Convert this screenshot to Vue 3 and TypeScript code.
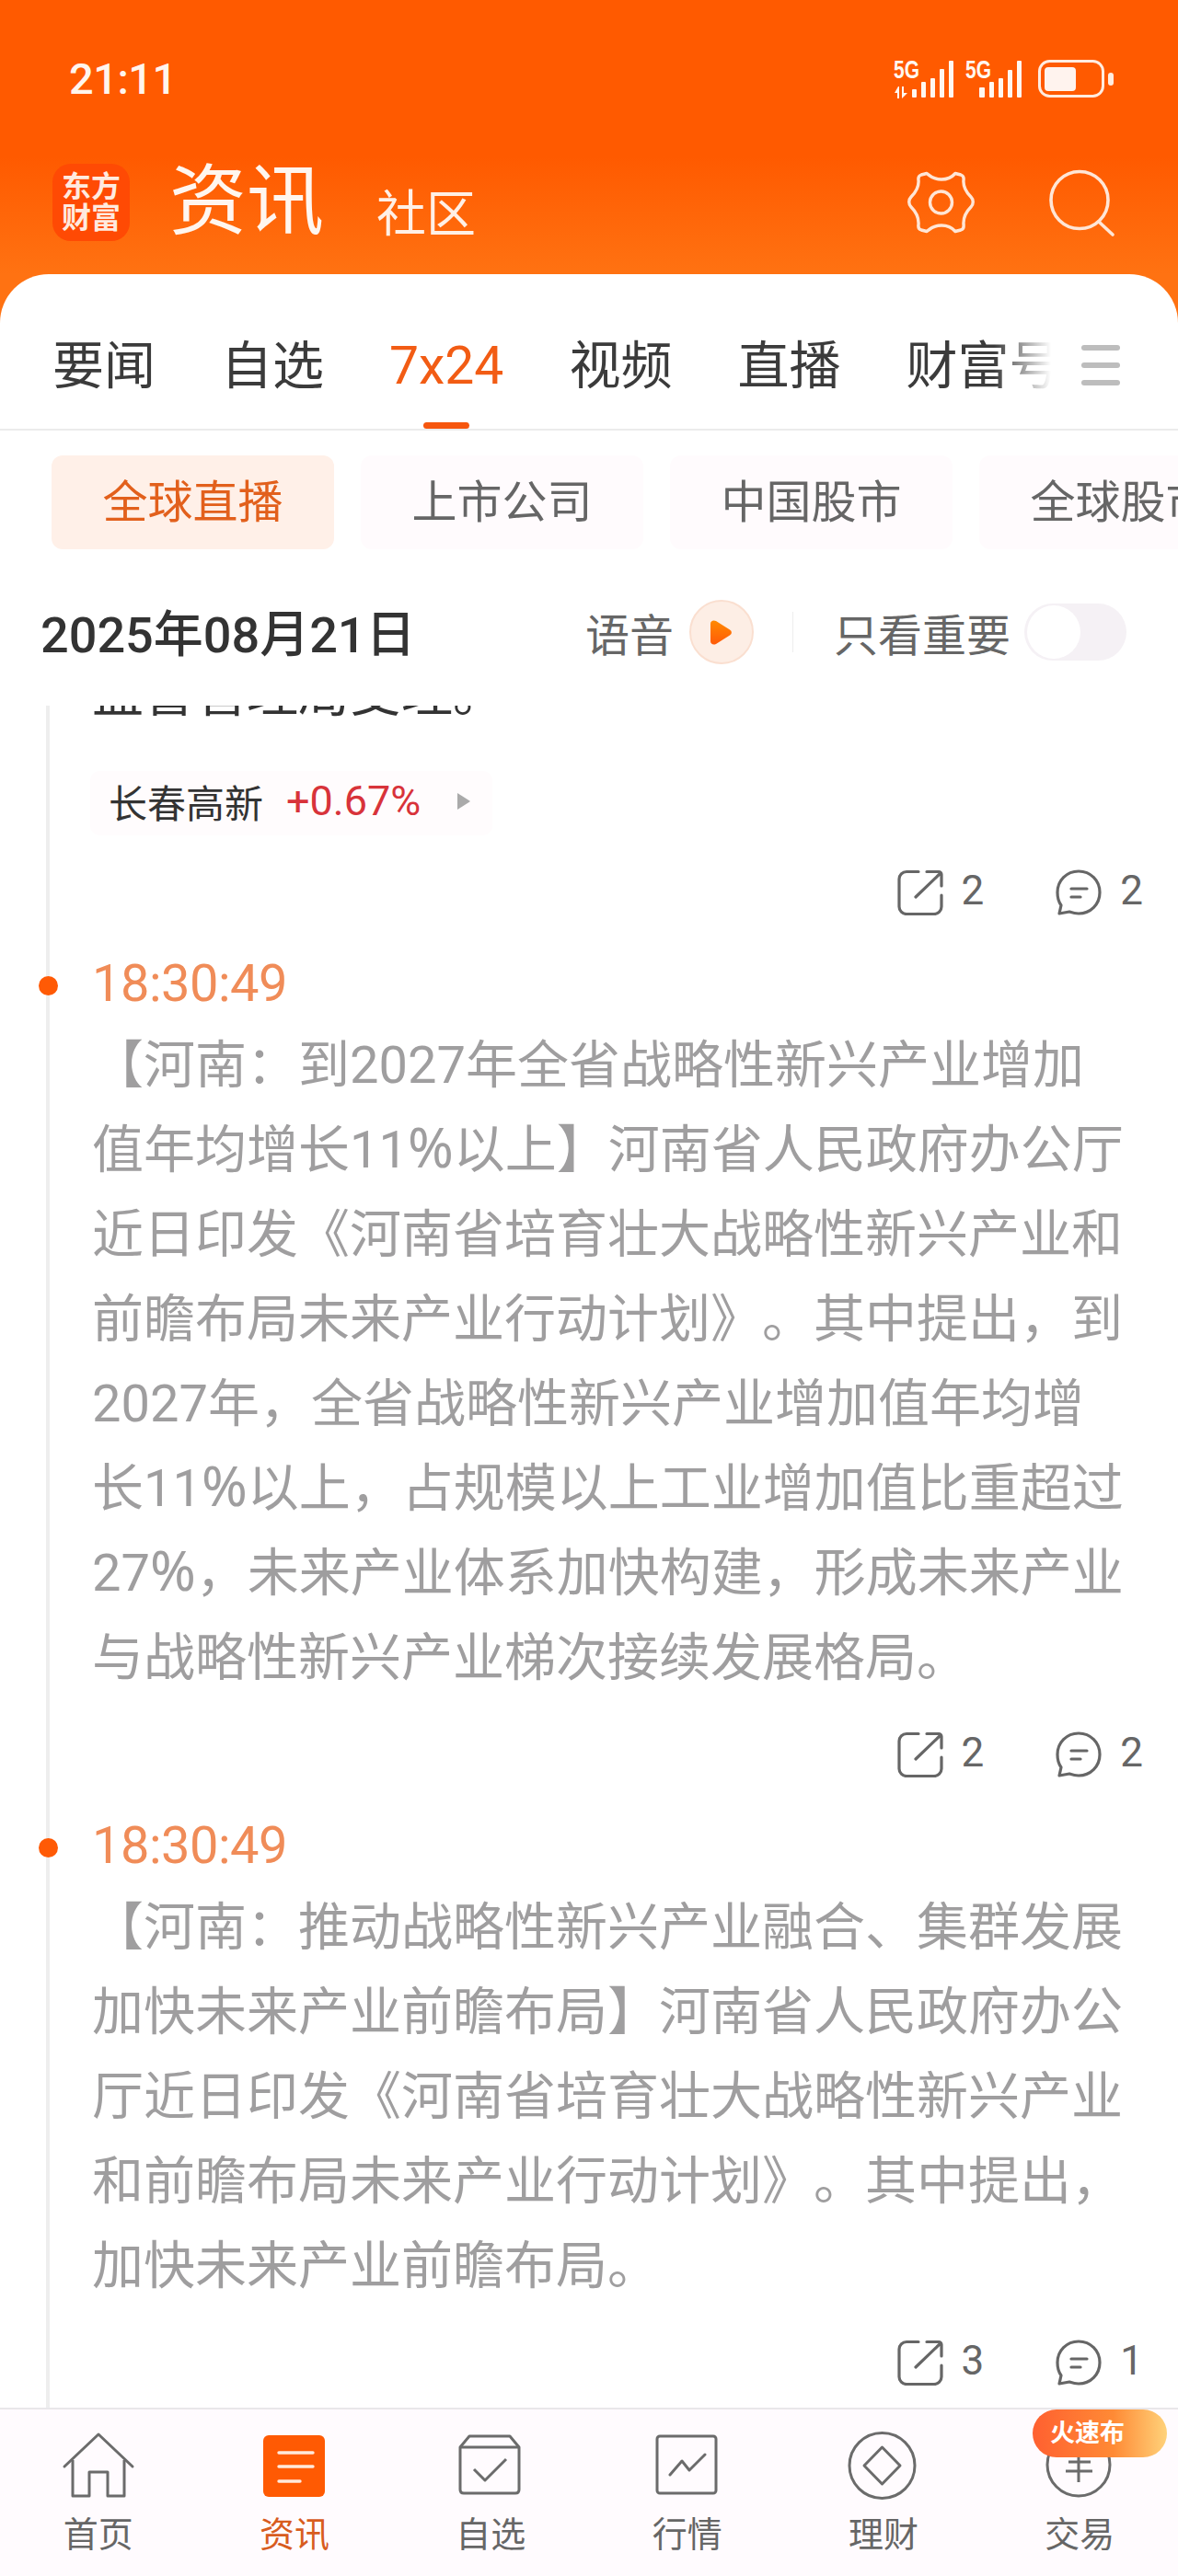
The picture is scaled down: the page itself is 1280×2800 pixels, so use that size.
<script setup lang="ts">
const tabs = ["要闻", "自选", "7x24", "视频", "直播", "财富号"];
const chips = ["全球直播", "上市公司", "中国股市", "全球股市"];

const news = [
  {
    time: "18:30:49",
    lines: [
      "【河南：到2027年全省战略性新兴产业增加",
      "值年均增长11%以上】河南省人民政府办公厅",
      "近日印发《河南省培育壮大战略性新兴产业和",
      "前瞻布局未来产业行动计划》。其中提出，到",
      "2027年，全省战略性新兴产业增加值年均增",
      "长11%以上，占规模以上工业增加值比重超过",
      "27%，未来产业体系加快构建，形成未来产业",
      "与战略性新兴产业梯次接续发展格局。",
    ],
    share: 2,
    comment: 2,
  },
  {
    time: "18:30:49",
    lines: [
      "【河南：推动战略性新兴产业融合、集群发展",
      "加快未来产业前瞻布局】河南省人民政府办公",
      "厅近日印发《河南省培育壮大战略性新兴产业",
      "和前瞻布局未来产业行动计划》。其中提出，",
      "加快未来产业前瞻布局。",
    ],
    share: 3,
    comment: 1,
  },
];

const navItems = [
  { key: "home", label: "首页" },
  { key: "news", label: "资讯" },
  { key: "fav", label: "自选" },
  { key: "market", label: "行情" },
  { key: "wealth", label: "理财" },
  { key: "trade", label: "交易" },
];
</script>

<template>
  <div class="phone">
    <header class="hero">
      <div class="status">
        <span class="clock">21:11</span>
        <div class="status-icons">
          <svg width="65" height="42" viewBox="0 0 65 42" class="sig">
            <text x="0" y="20" class="fiveg" textLength="28" lengthAdjust="spacingAndGlyphs">5G</text>
            <path d="M5 29L1 36H4V42H6V29ZM9 29V42L15 36H11V29Z" />
            <rect x="20" y="32" width="5" height="9" rx="1" />
            <rect x="30" y="24" width="5" height="17" rx="1" />
            <rect x="40" y="20" width="5" height="21" rx="1" />
            <rect x="50" y="10" width="5" height="31" rx="1" />
            <rect x="60" y="1" width="5" height="40" rx="1" />
          </svg>
          <svg width="61" height="42" viewBox="0 0 61 42" class="sig">
            <text x="0" y="20" class="fiveg" textLength="28" lengthAdjust="spacingAndGlyphs">5G</text>
            <rect x="15" y="30" width="6" height="11" rx="1" />
            <rect x="26" y="24" width="5" height="17" rx="1" />
            <rect x="36" y="20" width="5" height="21" rx="1" />
            <rect x="46" y="11" width="5" height="30" rx="1" />
            <rect x="56" y="1" width="5" height="40" rx="1" />
          </svg>
          <svg width="82" height="42" viewBox="0 0 82 42" class="batt">
            <rect x="1.500" y="1.500" width="69" height="38" rx="11" fill="none" stroke="#ffece0" stroke-width="3" />
            <rect x="7" y="8" width="34" height="26" rx="4" fill="#fff3ee" />
            <rect x="76" y="14" width="6" height="14" rx="3" fill="#ffece0" />
          </svg>
        </div>
      </div>

      <div class="titlebar">
        <div class="logo"><span>东方</span><span>财富</span></div>
        <span class="title">资讯</span>
        <span class="subtitle">社区</span>
        <div class="title-actions">
          <svg class="ic" width="71" height="68" viewBox="0 0 71 68" fill="none" stroke="#ffe6d6" stroke-width="3.400" stroke-linejoin="round">
            <path d="M14 4L20 2.500C25 7 30 9 36 9C42 9 47 7 51 2.500L57 4C60 5 60.500 7 60 10C59.500 16 62 22 68 28C71 31 71 36 68 39C62 45 59.500 51 60 58C60.500 61 60 63 57 64L51 65.500C47 61 42 59 36 59C30 59 25 61 20 65.500L14 64C11 63 10.500 61 11 58C11.500 51 9 45 3 39C0 36 0 31 3 28C9 22 11.500 16 11 10C10.500 7 11 5 14 4Z" />
            <circle cx="35.500" cy="34" r="12" />
          </svg>
          <svg class="ic" width="71" height="71" viewBox="0 0 71 71" fill="none" stroke="#ffe6d6" stroke-width="3.600">
            <circle cx="33" cy="32.500" r="31" />
            <path d="M54 56L69 70" stroke-linecap="round" />
          </svg>
        </div>
      </div>
    </header>

    <main class="sheet">
      <nav class="tabs">
        <div class="tab-scroll">
          <div
            v-for="(t, i) in tabs"
            :key="t"
            class="tab"
            :class="{ active: i === 2 }"
          >
            {{ t }}
          </div>
          <div class="tab-fade"></div>
        </div>
        <div class="menu-btn"><i></i><i></i><i></i></div>
      </nav>

      <div class="chips">
        <div v-for="(c, i) in chips" :key="c" class="chip" :class="{ on: i === 0 }">{{ c }}</div>
      </div>

      <div class="datebar">
        <span class="date">2025年08月21日</span>
        <div class="date-right">
          <span class="lab">语音</span>
          <span class="play">
            <svg width="23" height="27" viewBox="0 0 23 27">
              <defs>
                <linearGradient id="pg" x1="0" y1="0" x2="0" y2="1">
                  <stop offset="0" stop-color="#ff8a00" />
                  <stop offset="1" stop-color="#ff5a08" />
                </linearGradient>
              </defs>
              <path d="M0 4C0 1 3-.5 6 1L21 10.500C23.500 12 23.500 15 21 16.500L6 26C3 27.500 0 26 0 23Z" fill="url(#pg)" />
            </svg>
          </span>
          <span class="vline"></span>
          <span class="lab">只看重要</span>
          <span class="switch"><span class="knob"></span></span>
        </div>
      </div>

      <section class="feed">
        <div class="cut-line">监督管理局受理。</div>
        <div class="stock">
          <span class="s-name">长春高新</span>
          <span class="s-pct">+0.67%</span>
          <span class="s-arrow"></span>
        </div>
        <div class="actions first">
          <span class="act">
            <svg width="50" height="50" viewBox="0 0 50 50" fill="none" stroke="#666" stroke-width="3.200" stroke-linecap="round" stroke-linejoin="round">
              <path d="M23 2.500H10A8 8 0 0 0 2 10.500V40.500A8 8 0 0 0 10 48.500H40A8 8 0 0 0 48 40.500V28" />
              <path d="M20 30L46 5M32 2.500H45A3 3 0 0 1 48 5.500V18" />
            </svg>
            <b>2</b>
          </span>
          <span class="act">
            <svg width="50" height="50" viewBox="0 0 50 50" fill="none" stroke="#666" stroke-width="3.200" stroke-linecap="round" stroke-linejoin="round">
              <path d="M25 2C38 2 48 12 48 25S38 48 25 48C21 48 18 47 15 46L4 48L6 39C3 35 2 30 2 25C2 12 12 2 25 2Z" />
              <path d="M17 21H34M17 30H27" />
            </svg>
            <b>2</b>
          </span>
        </div>

        <article v-for="(n, idx) in news" :key="idx" class="item">
          <span class="dot"></span>
          <div class="time">{{ n.time }}</div>
          <div class="body">
            <div v-for="l in n.lines" :key="l" class="line">
              <template v-for="(part, pi) in l.split('%')" :key="pi"><span v-if="pi > 0" class="pc">%</span>{{ part }}</template>
            </div>
          </div>
          <div class="actions">
            <span class="act">
              <svg width="50" height="50" viewBox="0 0 50 50" fill="none" stroke="#666" stroke-width="3.200" stroke-linecap="round" stroke-linejoin="round">
                <path d="M23 2.500H10A8 8 0 0 0 2 10.500V40.500A8 8 0 0 0 10 48.500H40A8 8 0 0 0 48 40.500V28" />
                <path d="M20 30L46 5M32 2.500H45A3 3 0 0 1 48 5.500V18" />
              </svg>
              <b>{{ n.share }}</b>
            </span>
            <span class="act">
              <svg width="50" height="50" viewBox="0 0 50 50" fill="none" stroke="#666" stroke-width="3.200" stroke-linecap="round" stroke-linejoin="round">
                <path d="M25 2C38 2 48 12 48 25S38 48 25 48C21 48 18 47 15 46L4 48L6 39C3 35 2 30 2 25C2 12 12 2 25 2Z" />
                <path d="M17 21H34M17 30H27" />
              </svg>
              <b>{{ n.comment }}</b>
            </span>
          </div>
        </article>
      </section>

      <footer class="bottom">
        <div v-for="it in navItems" :key="it.key" class="nav" :class="{ on: it.key === 'news' }">
          <svg width="80" height="76" viewBox="0 0 80 76" fill="none" stroke="#6b6b6b" stroke-width="3" stroke-linejoin="round">
            <template v-if="it.key === 'home'">
              <path d="M3 38L40 3L77 38" stroke-linecap="round" />
              <path d="M12 31V70H30V44H50V70H68V31" />
            </template>
            <template v-else-if="it.key === 'news'">
              <rect x="6" y="4" width="67" height="67" rx="6" fill="#ff5a03" stroke="none" />
              <path d="M23 23H60M23 38H60M23 54H46" stroke="#ffe9dc" stroke-width="3.400" stroke-linecap="round" />
            </template>
            <template v-else-if="it.key === 'fav'">
              <path d="M7 17L17 5H61L71 17V63Q71 67 67 67H11Q7 67 7 63Z" />
              <path d="M7 17H71M22 41L34 53L57 30" />
            </template>
            <template v-else-if="it.key === 'market'">
              <rect x="7" y="5" width="64" height="62" rx="3" />
              <path d="M21 47L34 32L42 42L59 25" stroke-linecap="round" />
            </template>
            <template v-else-if="it.key === 'wealth'">
              <circle cx="38.500" cy="37" r="35.500" />
              <path d="M38.500 17L58 37L38.500 57L19 37Z" />
            </template>
            <template v-else>
              <circle cx="39" cy="36" r="34" />
              <path d="M28 33H52M25 43H54M39 20V55" />
            </template>
          </svg>
          <span class="nav-label">{{ it.label }}</span>
        </div>
        <div class="hot">火速布</div>
      </footer>
    </main>
  </div>
</template>

<style scoped>
.phone {
  width: 1280px;
  height: 2800px;
  position: relative;
  overflow: hidden;
  background: #fff;
  font-family: Roboto, "Noto Sans CJK SC", sans-serif;
  text-spacing-trim: space-all;
  display: flex;
  flex-direction: column;
}

.hero {
  height: 358px;
  flex: none;
  background: linear-gradient(180deg, #ff5a00 0px, #ff5a00 170px, #ff7212 298px);
  color: #fff;
}

.status {
  height: 178px;
  padding: 56px 70px 0 75px;
  box-sizing: border-box;
  display: flex;
  justify-content: space-between;
}

.clock {
  font-size: 47px;
  font-weight: 500;
  letter-spacing: -0.5px;
  line-height: 60px;
  color: #fff5ee;
}

.status-icons {
  display: flex;
  gap: 13px;
  padding-top: 9px;
  height: 42px;
}

.batt {
  margin-left: 5px;
}

.sig {
  fill: #fff7f0;
}

.fiveg {
  font-family: "Liberation Sans", sans-serif;
  font-size: 27px;
  font-weight: 700;
}

.titlebar {
  display: flex;
  align-items: center;
  padding-left: 57px;
  height: 84px;
}

.logo {
  width: 84px;
  height: 84px;
  flex: none;
  background: #ff4a04;
  border-radius: 20px;
  display: flex;
  flex-direction: column;
  align-items: center;
  justify-content: center;
  font-size: 32px;
  font-weight: 700;
  line-height: 34px;
  color: #ffeadf;
}

.title {
  font-size: 84px;
  margin-left: 43px;
  line-height: 84px;
  color: #fff6ef;
}

.subtitle {
  font-size: 54px;
  margin-left: 57px;
  margin-top: 28px;
  line-height: 56px;
  color: #fff0e6;
}

.title-actions {
  margin-left: auto;
  margin-right: 69px;
  display: flex;
  gap: 82px;
  align-items: center;
}

.ic {
  overflow: visible;
}

.sheet {
  flex: 1;
  margin-top: -60px;
  background: #fff;
  border-radius: 53px 53px 0 0;
  position: relative;
  display: flex;
  flex-direction: column;
  min-height: 0;
}

.tabs {
  height: 170px;
  flex: none;
  display: flex;
  border-bottom: 2px solid #ebebeb;
  position: relative;
  box-sizing: border-box;
}

.tab-scroll {
  display: flex;
  padding-left: 57px;
  gap: 71px;
  width: 1142px;
  overflow: hidden;
  position: relative;
  box-sizing: border-box;
}

.tab {
  font-size: 56px;
  line-height: 76px;
  padding-top: 62px;
  color: #3b3b3b;
  white-space: nowrap;
  position: relative;
  height: 168px;
  box-sizing: border-box;
}

.tab.active {
  color: #f25c14;
  font-size: 57px;
}

.tab.active::after {
  content: "";
  position: absolute;
  left: 50%;
  bottom: 0;
  width: 50px;
  height: 7px;
  margin-left: -25px;
  border-radius: 4px;
  background: #f6560e;
}

.tab-fade {
  position: absolute;
  right: 0;
  top: 40px;
  width: 62px;
  height: 100px;
  background: linear-gradient(90deg, rgba(255, 255, 255, 0), #fff);
}

.menu-btn {
  position: absolute;
  left: 1175px;
  top: 77px;
  width: 42px;
  display: flex;
  flex-direction: column;
  gap: 13px;
}

.menu-btn i {
  height: 6px;
  border-radius: 3px;
  background: #bdbdbd;
}

.chips {
  flex: none;
  display: flex;
  gap: 29px;
  padding: 27px 0 0 56px;
  overflow: hidden;
}

.chip {
  flex: none;
  width: 307px;
  height: 102px;
  border-radius: 12px;
  background: #fffbfd;
  color: #666;
  font-size: 49px;
  line-height: 104px;
  text-align: center;
}

.chip.on {
  background: #fff0e8;
  color: #e2601c;
}

.datebar {
  flex: none;
  height: 100px;
  margin-top: 40px;
  display: flex;
  align-items: center;
  justify-content: space-between;
  padding: 0 56px 0 44px;
  box-sizing: border-box;
}

.date {
  font-size: 54px;
  font-weight: 500;
  color: #333;
  margin-top: -3px;
}

.date-right {
  display: flex;
  align-items: center;
}

.lab {
  font-size: 48px;
  color: #666;
}

.play {
  width: 70px;
  height: 70px;
  margin-left: 17px;
  border-radius: 50%;
  background: #fdeee5;
  border: 2px solid #fadfd0;
  box-sizing: border-box;
  display: flex;
  align-items: center;
  justify-content: center;
}

.vline {
  width: 1px;
  height: 44px;
  background: #eee;
  margin: 0 44px 0 42px;
}

.switch {
  width: 111px;
  height: 62px;
  margin-left: 15px;
  border-radius: 31px;
  background: #f5f1f5;
  position: relative;
}

.knob {
  position: absolute;
  left: 3px;
  top: 2px;
  width: 58px;
  height: 58px;
  border-radius: 50%;
  background: #fff;
}

.feed {
  flex: 1;
  min-height: 0;
  position: relative;
  padding-left: 100px;
  padding-right: 38px;
  overflow: hidden;
  margin-top: 30px;
}

.feed::before {
  content: "";
  position: absolute;
  left: 50px;
  top: 0;
  bottom: 0;
  width: 4px;
  background: #eeeeee;
}

.cut-line {
  font-size: 56px;
  line-height: 92px;
  margin-top: -59px;
  color: #333;
}

.stock {
  display: flex;
  align-items: center;
  width: 437px;
  height: 70px;
  margin-top: 38px;
  margin-left: -2px;
  background: #fffcfd;
  border-radius: 10px;
  box-sizing: border-box;
  padding: 0 0 5px 20px;
}

.s-name {
  font-size: 42px;
  color: #333;
}

.s-pct {
  font-size: 45px;
  color: #d8333a;
  margin-left: 25px;
}

.s-arrow {
  width: 0;
  height: 0;
  margin-left: 40px;
  border-left: 14px solid #aaa;
  border-top: 9px solid transparent;
  border-bottom: 9px solid transparent;
}

.actions {
  display: flex;
  justify-content: flex-end;
  gap: 78px;
  height: 50px;
  margin-top: 34px;
}

.actions.first {
  margin-top: 37px;
}

.act {
  display: flex;
  align-items: flex-start;
  gap: 20px;
}

.act b {
  font-weight: 400;
  font-size: 44px;
  line-height: 46px;
  color: #666;
}

.item {
  position: relative;
  margin-top: 40px;
}

.dot {
  position: absolute;
  left: -58px;
  top: 26px;
  width: 21px;
  height: 21px;
  border-radius: 50%;
  background: #ff5a05;
}

.time {
  font-size: 56px;
  letter-spacing: -0.5px;
  line-height: 68px;
  color: #f08c58;
}

.body {
  color: #9f9e9f;
  font-size: 56px;
  line-height: 92px;
  margin-top: 9px;
}

.line {
  white-space: nowrap;
}

.pc {
  font-family: "Noto Sans", sans-serif;
  font-size: 60px;
  line-height: 0;
}

.bottom {
  flex: none;
  height: 183px;
  background: #fffbfe;
  border-top: 2px solid #e9e7ea;
  display: grid;
  grid-template-columns: repeat(6, 1fr);
  box-sizing: border-box;
  position: relative;
}

.nav {
  display: flex;
  flex-direction: column;
  align-items: center;
  padding-top: 24px;
}

.nav-label {
  font-size: 38px;
  line-height: 50px;
  margin-top: 11px;
  color: #666;
}

.nav.on .nav-label {
  color: #d85c1e;
}

.hot {
  position: absolute;
  left: 1122px;
  top: 0;
  width: 146px;
  height: 52px;
  border-radius: 26px;
  background: linear-gradient(90deg, #ff6030 0%, #ff8a35 60%, #ffd27a 100%);
  color: #fff;
  font-size: 27px;
  font-weight: 700;
  line-height: 52px;
  padding-left: 19px;
  box-sizing: border-box;
}
</style>

<style>
html,
body {
  margin: 0;
  background: #fff;
}
</style>
